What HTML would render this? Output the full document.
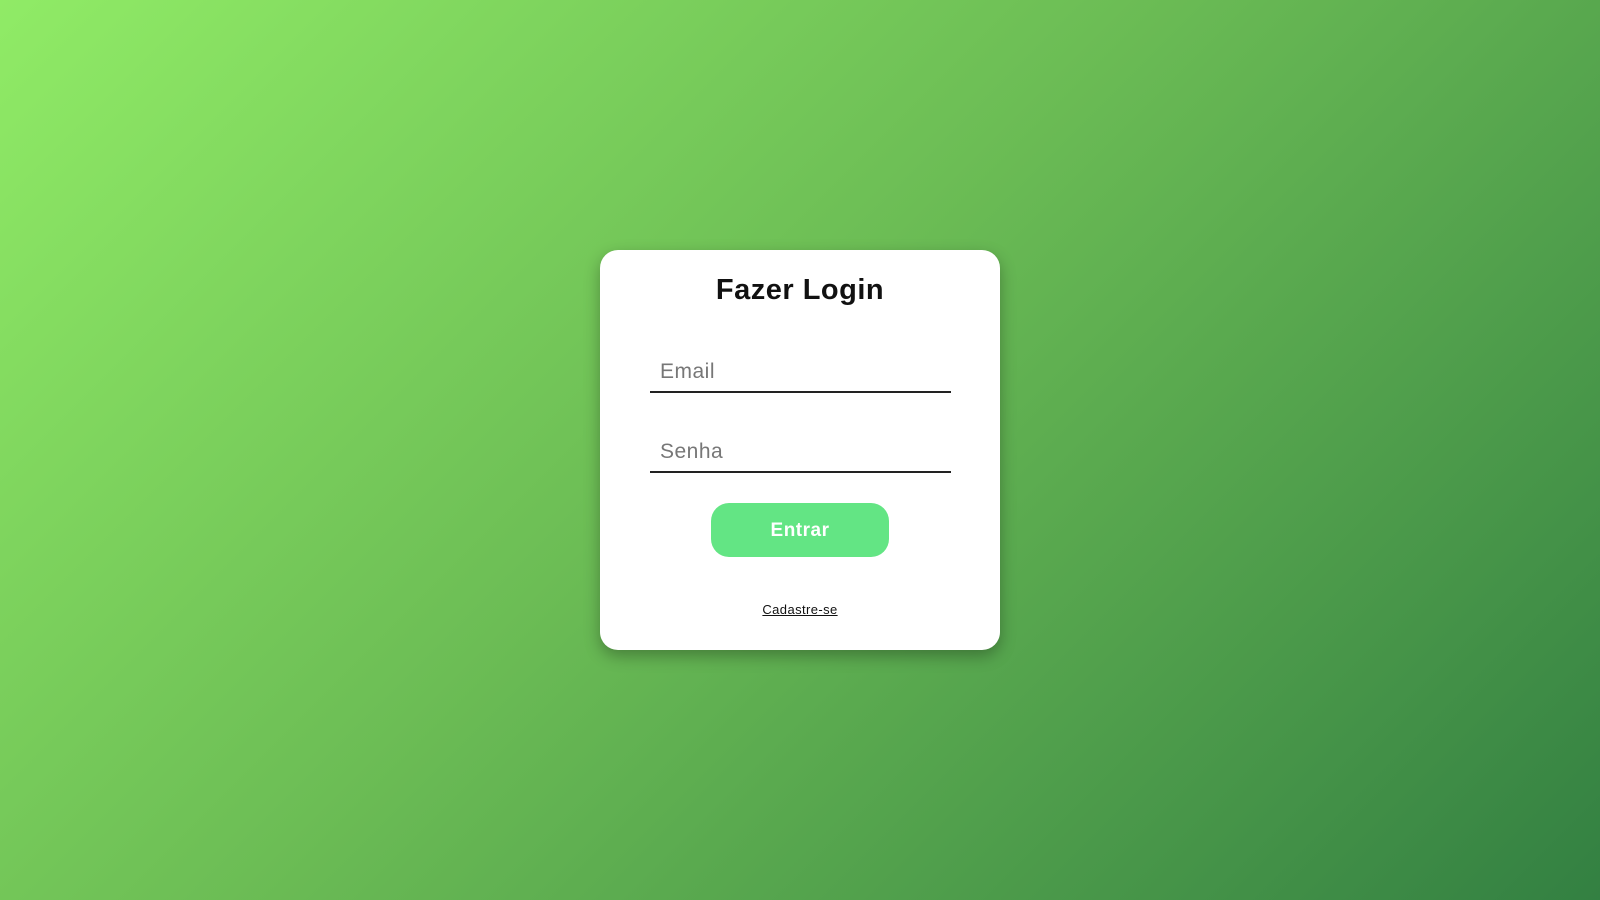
<!DOCTYPE html>
<html><head><meta charset="utf-8"><style>
html,body{margin:0;padding:0;width:1600px;height:900px;overflow:hidden}
body{background:linear-gradient(135deg,#90eb66 0%,#6cbd55 45%,#338042 100%);font-family:"Liberation Sans",sans-serif;position:relative}
.card{position:absolute;left:600px;top:250px;width:400px;height:400px;background:#fff;border-radius:18px;box-shadow:0 6px 16px rgba(0,0,0,0.3)}
h1{position:absolute;top:24px;left:0;width:100%;text-align:center;margin:0;font-size:29px;font-weight:bold;color:#111;letter-spacing:0.5px}
.inp{position:absolute;left:50px;width:301px;height:40px;border-bottom:2px solid #222;color:#777;font-size:21px;box-sizing:border-box;padding-left:10px;line-height:38px;letter-spacing:0.5px}
.btn{position:absolute;left:111px;top:253px;width:178px;height:54px;background:#63e584;border-radius:18px;color:#fff;font-weight:bold;font-size:19px;text-align:center;line-height:56px;letter-spacing:0.5px}
.link{position:absolute;top:352px;left:0;width:100%;text-align:center;font-size:13px;color:#111;text-decoration:underline;letter-spacing:0.4px}
</style></head><body>
<div class="card">
<h1>Fazer Login</h1>
<div class="inp" style="top:103px">Email</div>
<div class="inp" style="top:183px">Senha</div>
<div class="btn">Entrar</div>
<div class="link">Cadastre-se</div>
</div>
</body></html>
